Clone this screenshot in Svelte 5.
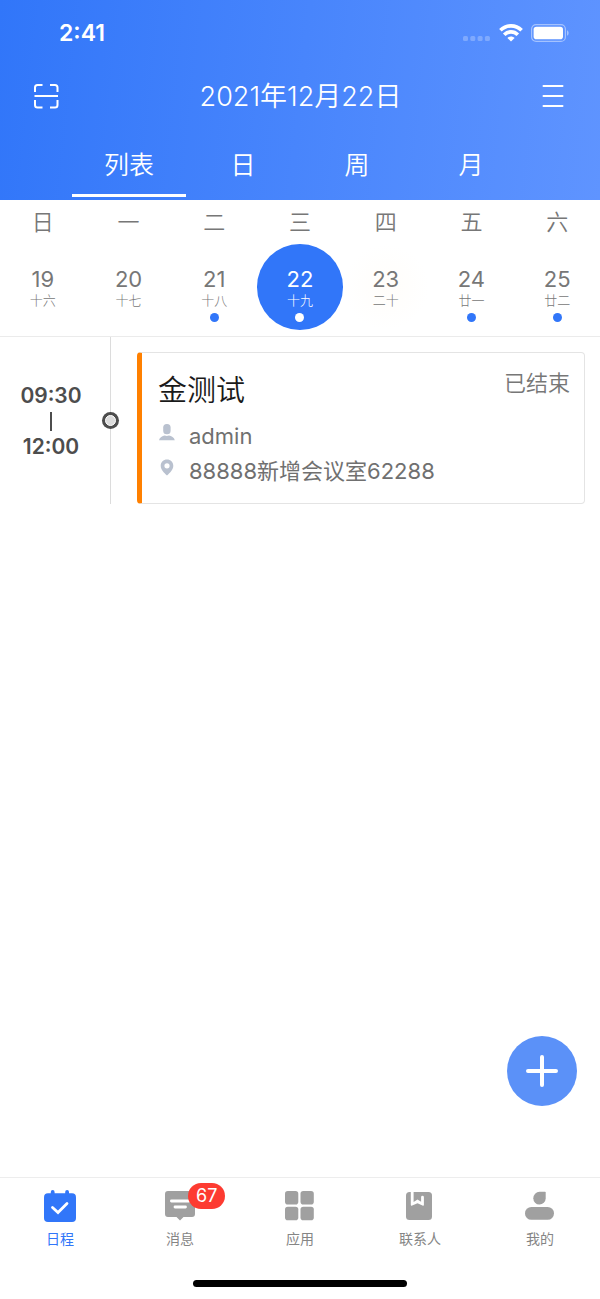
<script>
  const tabs = ['列表', '日', '周', '月'];

  const weekDays = [
    { week: '日', day: 19, lunar: '十六', hasEvent: false },
    { week: '一', day: 20, lunar: '十七', hasEvent: false },
    { week: '二', day: 21, lunar: '十八', hasEvent: true },
    { week: '三', day: 22, lunar: '十九', hasEvent: true },
    { week: '四', day: 23, lunar: '二十', hasEvent: false },
    { week: '五', day: 24, lunar: '廿一', hasEvent: true },
    { week: '六', day: 25, lunar: '廿二', hasEvent: true }
  ];

  const events = [
    {
      id: 1,
      start: '09:30',
      end: '12:00',
      title: '金测试',
      status: '已结束',
      owner: 'admin',
      room: '88888新增会议室62288'
    }
  ];

  const navItems = [
    { key: 'schedule', label: '日程' },
    { key: 'message', label: '消息', badge: 67 },
    { key: 'apps', label: '应用' },
    { key: 'contacts', label: '联系人' },
    { key: 'mine', label: '我的' }
  ];

  let activeTab = '列表';
  let selectedDay = 22;
  let activeNav = 'schedule';
</script>

<div class="page">
  <header class="header">
    <div class="status-bar">
      <span class="clock">2:41</span>
      <div class="status-icons">
        <svg width="28" height="18" viewBox="0 0 28 18" fill="#fff" fill-opacity="0.25">
          <rect x="0" y="12" width="5" height="5" rx="1.5" />
          <rect x="7.3" y="12" width="5" height="5" rx="1.5" />
          <rect x="14.6" y="12" width="5" height="5" rx="1.5" />
          <rect x="21.9" y="12" width="5" height="5" rx="1.5" />
        </svg>
        <svg width="24" height="18" viewBox="0 0 24 18" fill="none" stroke="#fff" stroke-width="3.7">
          <path d="M1.4 6.3C7.4 0.4 16.6 0.4 22.6 6.3" />
          <path d="M5.2 10.7C9.2 6.8 14.8 6.8 18.8 10.7" />
          <path d="M8.4 14C10.5 12 13.5 12 15.6 14L12 17.6Z" fill="#fff" stroke="none" />
        </svg>
        <svg width="38" height="18" viewBox="0 0 38 18">
          <rect x="0.6" y="0.6" width="33.8" height="16.8" rx="4.5" fill="none" stroke="#fff" stroke-opacity="0.45" stroke-width="1.2" />
          <rect x="2.6" y="2.8" width="29.4" height="12.4" rx="2.8" fill="#fff" />
          <path d="M36 6.2C38.2 7.2 38.2 10.8 36 11.8Z" fill="#fff" fill-opacity="0.45" />
        </svg>
      </div>
    </div>

    <div class="title-bar">
      <button class="icon-btn" aria-label="扫一扫">
        <svg width="26" height="26" viewBox="0 0 26 26" fill="none" stroke="#fff" stroke-width="2">
          <path d="M2 8V3.5Q2 1 4.5 1H9.5M17 1H22Q24.5 1 24.5 3.5V8M2 16V21Q2 23.5 4.5 23.5H9.5M17 23.5H22Q24.5 23.5 24.5 21V16M1.5 12H25" />
        </svg>
      </button>
      <h1>2021年12月22日</h1>
      <button class="icon-btn" aria-label="菜单">
        <svg width="22" height="26" viewBox="0 0 22 26" fill="none" stroke="#fff" stroke-width="2" stroke-linecap="round">
          <path d="M1.5 2H20.5M1.5 12H20.5M1.5 22H20.5" />
        </svg>
      </button>
    </div>

    <nav class="tabs">
      {#each tabs as tab}
        <button class="tab" class:active={tab === activeTab} on:click={() => (activeTab = tab)}>
          {tab}
        </button>
      {/each}
    </nav>
  </header>

  <section class="week">
    {#each weekDays as item (item.day)}
      <div class="week-col">
        <span class="week-name">{item.week}</span>
        <button
          class="day"
          class:selected={item.day === selectedDay}
          class:next={item.day === selectedDay + 1}
          on:click={() => (selectedDay = item.day)}
        >
          <span class="day-num">{item.day}</span>
          <span class="lunar">{item.lunar}</span>
          <span class="dot" class:visible={item.hasEvent}></span>
        </button>
      </div>
    {/each}
  </section>

  <main class="timeline">
    {#each events as event (event.id)}
      <article class="event">
        <div class="time">
          <span>{event.start}</span>
          <i></i>
          <span>{event.end}</span>
        </div>
        <div class="rail"><span class="node"></span></div>
        <div class="card">
          <div class="card-head">
            <h2>{event.title}</h2>
            <span class="status">{event.status}</span>
          </div>
          <p class="info">
            <svg width="17" height="18" viewBox="0 0 17 18" fill="#b9c1cf">
              <rect x="5.2" y="0" width="7.4" height="10.3" rx="3.5" />
              <path d="M1 16.3C1.6 13.3 4.4 12 6.7 11.5Q8.9 12.3 11 11.5C13.4 12 16.2 13.3 16.8 16.3Z" />
            </svg>
            {event.owner}
          </p>
          <p class="info">
            <svg width="17" height="18" viewBox="0 0 17 18" fill="#b9c1cf">
              <path fill-rule="evenodd" d="M9 0.6C5.4 0.6 2.7 3.3 2.7 6.8C2.7 10.8 5.9 13.5 9 16.6C12.1 13.5 15.3 10.8 15.3 6.8C15.3 3.3 12.6 0.6 9 0.6ZM9 4.2A2.6 2.6 0 1 1 9 9.4A2.6 2.6 0 1 1 9 4.2Z" />
            </svg>
            {event.room}
          </p>
        </div>
      </article>
    {/each}
  </main>

  <button class="fab" aria-label="新建日程">
    <svg width="32" height="32" viewBox="0 0 32 32" fill="none" stroke="#fff" stroke-width="4" stroke-linecap="round">
      <path d="M16 2V30M2 16H30" />
    </svg>
  </button>

  <footer class="footer">
    <nav class="bottom-nav">
      {#each navItems as item (item.key)}
        <button class="nav-item" class:active={item.key === activeNav} on:click={() => (activeNav = item.key)}>
          <span class="nav-icon">
            <svg width="32" height="32" viewBox="0 0 32 32" fill="currentColor">
              {#if item.key === 'schedule'}
                <rect x="0" y="3.3" width="32" height="28.7" rx="4" />
                <rect x="6.8" y="0" width="3.8" height="7" rx="1.9" />
                <rect x="21.2" y="0" width="3.8" height="7" rx="1.9" />
                <path d="M8.5 17.5L14 22.5L23 13.5" fill="none" stroke="#fff" stroke-width="2.8" stroke-linecap="round" />
              {:else if item.key === 'message'}
                <path d="M4 1H28Q31 1 31 4V24Q31 27 28 27H19.5L16 30.5L12.5 27H4Q1 27 1 24V4Q1 1 4 1Z" />
                <path d="M7.4 11H25M11 17H21.5" stroke="#fff" stroke-width="2.8" stroke-linecap="round" />
              {:else if item.key === 'apps'}
                <rect x="1" y="1" width="13.3" height="13.5" rx="2.8" />
                <rect x="16.5" y="1" width="13.3" height="13.5" rx="2.8" />
                <rect x="1" y="16.7" width="13.3" height="13.5" rx="2.8" />
                <rect x="16.5" y="16.7" width="13.3" height="13.5" rx="2.8" />
              {:else if item.key === 'contacts'}
                <rect x="2" y="2" width="26" height="28" rx="3.5" />
                <path d="M6.8 1V14.8Q6.8 16.2 8.2 15.6L13.5 13.3L18.5 15.6Q19.9 16.2 19.9 14.8V7.2A1.4 1.4 0 0 0 17.1 7.2V11.8L13.5 9.5L9.6 12V1Z" fill="#fff" />
              {:else}
                <path d="M15.5 1.8H21Q21.7 1.8 21.7 2.5V8.4A6.2 6.4 0 1 1 15.5 1.8Z" />
                <rect x="1" y="17" width="29" height="12.8" rx="6.4" />
              {/if}
            </svg>
            {#if item.badge}
              <span class="badge">{item.badge}</span>
            {/if}
          </span>
          <span class="nav-label">{item.label}</span>
        </button>
      {/each}
    </nav>
    <div class="home-indicator"></div>
  </footer>
</div>

<style>
  :global(body) {
    background: #fff;
  }

  .page {
    display: flex;
    flex-direction: column;
    min-height: 100vh;
    font-family: Inter, 'Noto Sans CJK SC', sans-serif;
    color: #777;
  }

  button {
    padding: 0;
    border: none;
    background: none;
    color: inherit;
    font: inherit;
    cursor: pointer;
  }

  svg {
    display: block;
  }

  h1, h2, p {
    margin: 0;
    font-weight: 350;
  }

  .header {
    background: linear-gradient(96deg, #3176f9, #5f94ff);
    color: #fff;
  }

  .status-bar {
    display: flex;
    align-items: center;
    justify-content: space-between;
    height: 66px;
    padding: 0 31px 0 59px;
  }

  .clock {
    font-size: 23px;
    font-weight: 600;
  }

  .status-icons {
    display: flex;
    align-items: center;
    gap: 8px;
  }

  .title-bar {
    display: flex;
    align-items: center;
    justify-content: space-between;
    height: 62px;
    padding: 0 36px 0 33px;
  }

  .title-bar h1 {
    font-size: 27px;
    line-height: 36px;
  }

  .tabs {
    display: flex;
    padding: 3px 72px;
  }

  .tab {
    flex: 1;
    height: 66px;
    box-sizing: border-box;
    border-bottom: 3px solid transparent;
    font-size: 25px;
    font-weight: 350;
  }

  .tab.active {
    border-bottom-color: #fff;
  }

  .week {
    display: grid;
    grid-template-columns: repeat(7, 1fr);
    padding-bottom: 6px;
    border-bottom: 1px solid #ebebeb;
  }

  .week-col {
    display: flex;
    flex-direction: column;
  }

  .week-name {
    height: 44px;
    line-height: 44px;
    text-align: center;
    font-size: 22px;
    font-weight: 350;
  }

  .day {
    display: flex;
    flex-direction: column;
    align-items: center;
    aspect-ratio: 1;
    padding-top: 23px;
    box-sizing: border-box;
    border-radius: 50%;
  }

  .day.next {
    background: radial-gradient(circle closest-side, #fffdfa, #fff);
  }

  .day-num {
    font-size: 22px;
    line-height: 24px;
  }

  .lunar {
    font-size: 13px;
    font-weight: 300;
    line-height: 18px;
  }

  .dot {
    width: 9px;
    height: 9px;
    margin-top: 4px;
    border-radius: 50%;
  }

  .dot.visible {
    background: #3176f9;
  }

  .day.selected {
    background: #3176f9;
    color: #fff;
  }

  .day.selected .dot {
    background: #fff;
  }

  .timeline {
    flex: 1;
  }

  .event {
    display: flex;
    padding-right: 15px;
  }

  .time {
    display: flex;
    flex-direction: column;
    align-items: center;
    justify-content: center;
    width: 102px;
    padding-top: 2px;
    color: #4d4d4d;
    font-size: 21px;
    font-weight: 600;
    line-height: 26px;
  }

  .time i {
    width: 2px;
    height: 19px;
    margin: 3px 0;
    background: #4d4d4d;
  }

  .rail {
    display: flex;
    align-items: center;
    justify-content: center;
    width: 17px;
    margin-right: 18px;
    background: linear-gradient(#dcdcdc, #dcdcdc) center / 1px 100% no-repeat;
  }

  .node {
    width: 9px;
    height: 9px;
    border: 1px solid #fff;
    border-radius: 50%;
    background: #dcdcdc;
    box-shadow: 0 0 0 3px #4d4d4d;
  }

  .card {
    flex: 1;
    margin-top: 15px;
    padding: 15px 14px 14px 16px;
    border: 1px solid #e4e4e4;
    border-left: 5px solid #ff8000;
    border-radius: 4px;
  }

  .card-head {
    display: flex;
    align-items: flex-start;
    justify-content: space-between;
    margin-bottom: 5px;
  }

  .card h2 {
    color: #1a1a1a;
    font-size: 29px;
    line-height: 46px;
  }

  .status {
    font-size: 22px;
    font-weight: 350;
    line-height: 30px;
  }

  .info {
    display: flex;
    gap: 14px;
    color: #707070;
    font-size: 22px;
    font-weight: 400;
    line-height: 35px;
  }

  .info svg {
    margin-top: 5px;
  }

  .fab {
    position: fixed;
    right: 23px;
    bottom: 193px;
    display: flex;
    align-items: center;
    justify-content: center;
    width: 70px;
    height: 70px;
    border-radius: 50%;
    background: #5b91f8;
  }

  .footer {
    border-top: 1px solid #ededed;
    background: #fff;
  }

  .bottom-nav {
    display: flex;
    height: 102px;
    padding-top: 12px;
    box-sizing: border-box;
  }

  .nav-item {
    display: flex;
    flex: 1;
    flex-direction: column;
    align-items: center;
    gap: 6px;
    color: #a0a0a0;
  }

  .nav-item.active {
    color: #3176f9;
  }

  .nav-icon {
    position: relative;
  }

  .nav-label {
    color: #858585;
    font-size: 14px;
    line-height: 21px;
  }

  .active .nav-label {
    color: #3176f9;
  }

  .badge {
    position: absolute;
    top: -7px;
    left: 24px;
    padding: 0 8px;
    border-radius: 13px;
    background: #fd3b31;
    color: #fff;
    font-size: 18px;
    line-height: 26px;
  }

  .home-indicator {
    width: 214px;
    height: 7px;
    margin: 0 auto 12px;
    border-radius: 4px;
    background: #000;
  }
</style>
